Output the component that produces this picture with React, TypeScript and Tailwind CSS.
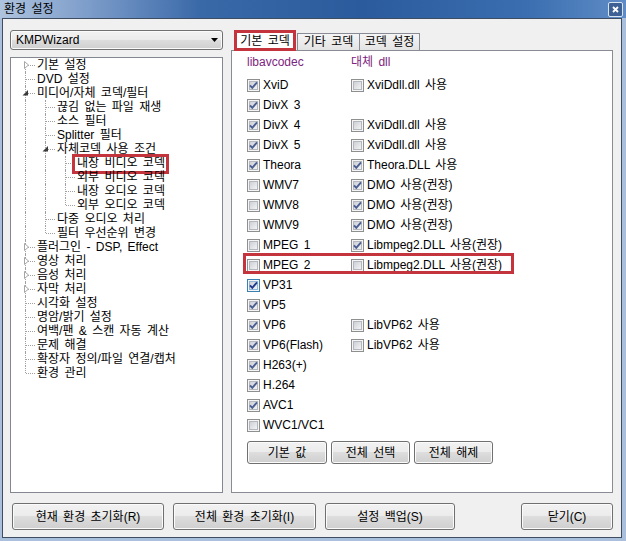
import React from "react";

type TreeItem = { label: string; level: number; exp?: "open" | "closed"; mark?: boolean };

const tree: TreeItem[] = [
  { label: "기본 설정", level: 0, exp: "closed" },
  { label: "DVD 설정", level: 0 },
  { label: "미디어/자체 코덱/필터", level: 0, exp: "open" },
  { label: "끊김 없는 파일 재생", level: 1 },
  { label: "소스 필터", level: 1 },
  { label: "Splitter 필터", level: 1 },
  { label: "자체코덱 사용 조건", level: 1, exp: "open" },
  { label: "내장 비디오 코덱", level: 2, mark: true },
  { label: "외부 비디오 코덱", level: 2 },
  { label: "내장 오디오 코덱", level: 2 },
  { label: "외부 오디오 코덱", level: 2 },
  { label: "다중 오디오 처리", level: 1 },
  { label: "필터 우선순위 변경", level: 1 },
  { label: "플러그인 - DSP, Effect", level: 0, exp: "closed" },
  { label: "영상 처리", level: 0, exp: "closed" },
  { label: "음성 처리", level: 0, exp: "closed" },
  { label: "자막 처리", level: 0, exp: "closed" },
  { label: "시각화 설정", level: 0 },
  { label: "명암/밝기 설정", level: 0 },
  { label: "여백/팬 & 스캔 자동 계산", level: 0 },
  { label: "문제 해결", level: 0 },
  { label: "확장자 정의/파일 연결/캡처", level: 0 },
  { label: "환경 관리", level: 0 },
];

type Codec = { name: string; on: boolean; alt?: string; altOn?: boolean; hot?: boolean; mark?: boolean };

const codecs: Codec[] = [
  { name: "XviD", on: true, alt: "XviDdll.dll 사용", altOn: false },
  { name: "DivX 3", on: true },
  { name: "DivX 4", on: true, alt: "XviDdll.dll 사용", altOn: false },
  { name: "DivX 5", on: true, alt: "XviDdll.dll 사용", altOn: false },
  { name: "Theora", on: true, alt: "Theora.DLL 사용", altOn: true },
  { name: "WMV7", on: false, alt: "DMO 사용(권장)", altOn: true },
  { name: "WMV8", on: false, alt: "DMO 사용(권장)", altOn: true },
  { name: "WMV9", on: false, alt: "DMO 사용(권장)", altOn: true },
  { name: "MPEG 1", on: false, alt: "Libmpeg2.DLL 사용(권장)", altOn: true },
  { name: "MPEG 2", on: false, alt: "Libmpeg2.DLL 사용(권장)", altOn: false, mark: true },
  { name: "VP31", on: true, hot: true },
  { name: "VP5", on: true },
  { name: "VP6", on: true, alt: "LibVP62 사용", altOn: false },
  { name: "VP6(Flash)", on: true, alt: "LibVP62 사용", altOn: false },
  { name: "H263(+)", on: true },
  { name: "H.264", on: true },
  { name: "AVC1", on: true },
  { name: "WVC1/VC1", on: false },
];

// does the item at i have a later sibling on the same level?
const hasNext = (i: number) => {
  const lvl = tree[i].level;
  for (let j = i + 1; j < tree.length; j++) {
    if (tree[j].level < lvl) return false;
    if (tree[j].level === lvl) return true;
  }
  return false;
};

const guidesFor = (i: number) => {
  const out: boolean[] = [];
  for (let k = 0; k < tree[i].level; k++) {
    let a = i - 1;
    while (a >= 0 && tree[a].level !== k) a--;
    out.push(a >= 0 && hasNext(a));
  }
  return out;
};

const winFace =
  "rounded-[3px] border border-[#707070] bg-[linear-gradient(to_bottom,#f2f2f2_0%,#ebebeb_50%,#dddddd_50%,#cfcfcf_100%)] shadow-[inset_0_0_0_1px_#fbfbfb] text-black";
const winBtn = `flex items-center justify-center ${winFace}`;

const CheckBox = ({ checked, hot }: { checked: boolean; hot?: boolean }) => (
  <svg width="13" height="13" viewBox="0 0 13 13" className="shrink-0">
    <defs>
      <linearGradient id="cbfill" x1="0" y1="0" x2="1" y2="1">
        <stop offset="0" stopColor="#c9cdd3" />
        <stop offset="1" stopColor="#f6f6f6" />
      </linearGradient>
    </defs>
    <rect x="0.5" y="0.5" width="12" height="12" fill="#f5f5f5" stroke={hot ? "#3c7fb1" : "#8e8f8f"} />
    <rect x="2.5" y="2.5" width="8" height="8" fill="url(#cbfill)" stroke={hot ? "#8fb8d8" : "#b4b8be"} />
    {checked && (
      <path
        d="M3 6.3 L5.3 8.9 L10 3.4"
        fill="none"
        stroke={hot ? "#1d3a8f" : "#4b5e92"}
        strokeWidth="1.9"
      />
    )}
  </svg>
);

const TreeRow = ({ item, i }: { item: TreeItem; i: number }) => {
  const guides = guidesFor(i);
  const first = i === 0;
  const last = !hasNext(i);
  const vert = first ? "top-[7px] h-[7px]" : last ? "top-0 h-[7px]" : "top-0 h-full";
  return (
    <div className="flex h-[14px] items-center">
      {guides.map((g, k) => (
        <div key={k} className="relative h-full w-5 shrink-0">
          {g && <span className="absolute left-[10px] top-0 h-full border-l border-dotted border-[#a0a0a0]" />}
        </div>
      ))}
      <div className="relative h-full w-5 shrink-0">
        <span className={`absolute left-[10px] border-l border-dotted border-[#a0a0a0] ${vert}`} />
        <span className="absolute left-[11px] top-[7px] w-[9px] border-t border-dotted border-[#a0a0a0]" />
        {item.exp === "closed" && (
          <svg width="7" height="10" viewBox="0 0 7 10" className="absolute left-[8px] top-[2px]">
            <path d="M1.5 1.5 L5.5 5 L1.5 8.5 Z" fill="#ffffff" stroke="#a6a6a6" />
          </svg>
        )}
        {item.exp === "open" && (
          <svg width="7" height="8" viewBox="0 0 7 8" className="absolute left-[7px] top-[3px]">
            <path d="M6 1 L6 6.5 L0.5 6.5 Z" fill="#3a3a3a" />
          </svg>
        )}
      </div>
      <span className="relative ml-[2px] whitespace-nowrap">
        {item.label}
        {item.mark && (
          <span className="absolute -left-[5px] -right-[4px] -top-[2px] -bottom-[4px] border-[3px] border-[#c4343c]" />
        )}
      </span>
    </div>
  );
};

const CodecRow = ({ c }: { c: Codec }) => (
  <div className="relative flex h-[20px] items-center">
    <div className="flex w-[104px] items-center gap-[3px]">
      <CheckBox checked={c.on} hot={c.hot} />
      <span className="whitespace-nowrap">{c.name}</span>
    </div>
    {c.alt && (
      <div className="flex items-center gap-[3px]">
        <CheckBox checked={!!c.altOn} />
        <span className="whitespace-nowrap">{c.alt}</span>
      </div>
    )}
    {c.mark && <span className="absolute -left-[4px] -top-[2px] h-[21px] w-[271px] border-[3px] border-[#c4343c]" />}
  </div>
);

export default function App() {
  return (
    <div className="flex h-[541px] w-[626px] flex-col bg-[#a9bfdb] font-['Liberation_Sans','Noto_Sans_CJK_KR',sans-serif] text-[12px] leading-[14px] text-black [word-spacing:2px]">
      {/* title bar */}
      <div className="flex h-[18px] shrink-0 items-center justify-between bg-[linear-gradient(to_right,#aec3de_0%,#7d9dca_14%,#3a69a8_32%,#2b5b9c_58%,#3a6eb0_84%,#5f8cc6_100%)] pl-[4px] pr-[3px]">
        <span className="text-[12px]">환경 설정</span>
        <div className="mt-[1px] flex h-[15px] w-[15px] items-center justify-center rounded-[2px] border border-[#d9e4f3] bg-[#3e6195]">
          <svg width="7" height="7" viewBox="0 0 7 7">
            <path d="M1 1 L6 6 M6 1 L1 6" stroke="#ffffff" strokeWidth="1.8" />
          </svg>
        </div>
      </div>

      {/* dialog body */}
      <div className="ml-[2px] flex h-[520px] w-[620px] flex-col border border-[#3f4d63] bg-[#f0f0f0] pt-[9px]">
        <div className="flex h-[465px] pl-[7px] pr-[8px]">
          {/* left column */}
          <div className="flex w-[213px] flex-col">
            <div className={`${winFace} mt-[2px] flex h-[20px] items-center justify-between pl-[5px] pr-[4px]`}>
              <span>KMPWizard</span>
              <svg width="7" height="4" viewBox="0 0 7 4">
                <path d="M0 0 L7 0 L3.5 4 Z" fill="#000000" />
              </svg>
            </div>
            <div className="mt-[7px] flex-1 border border-[#828790] bg-white pl-[4px]">
              {tree.map((t, i) => (
                <TreeRow key={i} item={t} i={i} />
              ))}
            </div>
          </div>

          {/* right column */}
          <div className="ml-[8px] flex w-[382px] flex-col">
            <div className="mt-[2px] flex h-[20px] items-start">
              <div className="relative z-10 ml-[3px] flex h-[21px] w-[62px] items-center justify-center border-[3px] border-[#c4343c] bg-white">
                기본 코덱
              </div>
              <div className="ml-[1px] mt-[3px] flex h-[17px] w-[63px] items-center justify-center border border-b-0 border-[#898c95] bg-[linear-gradient(to_bottom,#f5f5f5,#e3e3e3)]">
                기타 코덱
              </div>
              <div className="-ml-px mt-[3px] flex h-[17px] w-[61px] items-center justify-center border border-b-0 border-[#898c95] bg-[linear-gradient(to_bottom,#f5f5f5,#e3e3e3)]">
                코덱 설정
              </div>
            </div>
            <div className="flex flex-1 flex-col border border-[#898c95] bg-white pl-[15px] pt-[1px]">
              <div className="flex h-[20px] items-center text-[#7e2380]">
                <span className="w-[104px]">libavcodec</span>
                <span>대체 dll</span>
              </div>
              <div className="mt-[3px] flex flex-col">
                {codecs.map((c) => (
                  <CodecRow key={c.name} c={c} />
                ))}
              </div>
              <div className="mt-[6px] flex gap-[4px]">
                <div className={`${winBtn} h-[23px] w-[80px]`}>기본 값</div>
                <div className={`${winBtn} h-[23px] w-[79px]`}>전체 선택</div>
                <div className={`${winBtn} h-[23px] w-[79px]`}>전체 해제</div>
              </div>
            </div>
          </div>
        </div>

        {/* bottom buttons */}
        <div className="mt-[10px] flex h-[27px] pl-[9px] pr-[8px]">
          <div className={`${winBtn} w-[152px]`}>현재 환경 초기화(R)</div>
          <div className={`${winBtn} ml-[9px] w-[143px]`}>전체 환경 초기화(I)</div>
          <div className={`${winBtn} ml-[9px] w-[130px]`}>설정 백업(S)</div>
          <div className={`${winBtn} ml-auto w-[92px]`}>닫기(C)</div>
        </div>
      </div>
    </div>
  );
}
